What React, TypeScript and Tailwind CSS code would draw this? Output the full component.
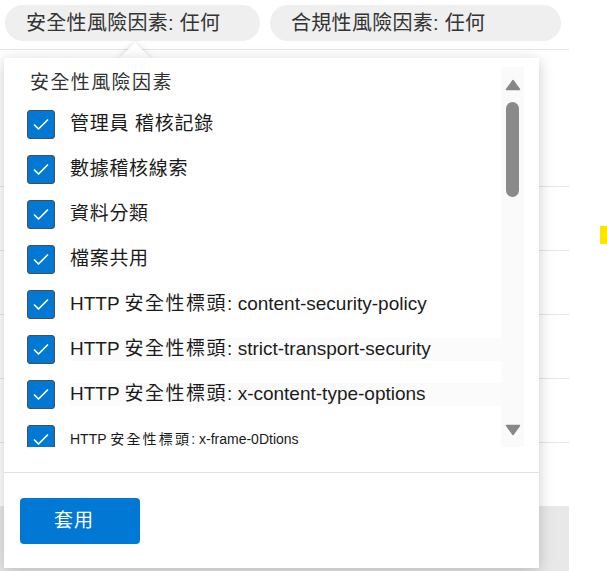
import React from "react";

const Check = () => (
  <div className="w-[28px] h-[29px] shrink-0 rounded-[3px] bg-[#0078d4] border border-[#4d4d4d] flex items-center justify-center">
    <svg width="26" height="27" viewBox="0 0 26 27">
      <path d="M6.5 14 L10.5 18 L19.5 9" fill="none" stroke="white" strokeWidth="1.7" strokeLinecap="round" strokeLinejoin="round" />
    </svg>
  </div>
);

const Row = ({ children, shade = false }: { children: React.ReactNode; shade?: boolean }) => (
  <div className="h-[45px] flex items-center">
    <Check />
    <div className={"ml-[15px] flex-1 h-[23px] flex items-center whitespace-nowrap text-[#1b1b1b] " + (shade ? "bg-[#fbfbfb]" : "")}>
      {children}
    </div>
  </div>
);

const HttpLabel = ({ rest }: { rest: string }) => (
  <span className="text-[19px]">
    HTTP <span className="tracking-[1.5px]">安全性標頭</span>: {rest}
  </span>
);

export default function App() {
  return (
    <div className="relative w-[607px] h-[571px] bg-white overflow-hidden font-['Liberation_Sans','Noto_Sans_CJK_TC',sans-serif]">
      {/* page behind */}
      <div className="w-[569px] flex flex-col">
        <div className="h-[50px] border-b border-[#e5e5e5] pt-[5px] pl-[5px] flex gap-[10px]">
          <div className="h-[36px] w-[255px] rounded-full bg-[#efefef] flex items-center pl-[21px] text-[20px] text-[#333] tracking-[0.3px]">
            安全性風險因素: 任何
          </div>
          <div className="h-[36px] w-[291px] rounded-full bg-[#efefef] flex items-center pl-[21px] text-[20px] text-[#333] tracking-[0.3px]">
            合規性風險因素: 任何
          </div>
        </div>
        <div className="h-[136px]" />
        <div className="h-[64px] border-t border-[#e6e6e6]" />
        <div className="h-[64px] border-t border-[#e6e6e6]" />
        <div className="h-[64px] border-t border-[#e6e6e6]" />
        <div className="h-[64px] border-t border-[#e6e6e6]" />
        <div className="h-[64px] border-t border-[#e6e6e6]" />
        <div className="h-[65px] bg-[#e8e8e8]" />
      </div>

      {/* yellow marker */}
      <div className="absolute left-[600px] top-[226px] w-[7px] h-[18px] bg-[#ffe500]" />

      {/* caret */}
      <div className="absolute left-[124px] top-[47px] w-[22px] h-[22px] rotate-45 bg-white shadow-[0_0_6px_rgba(0,0,0,0.15)]" />

      {/* popup */}
      <div className="absolute left-[4px] top-[58px] w-[535px] h-[510px] bg-white shadow-[0_3px_14px_rgba(0,0,0,0.2)] flex flex-col">
        <div className="pt-[9px] flex h-[389px]">
          <div className="flex-1 h-[380px] overflow-hidden pl-[23px]">
            <div className="pt-[5px] pl-[3px] leading-[22px] text-[19px] text-[#333] tracking-[1.4px]">安全性風險因素</div>
            <div className="mt-[8px] flex flex-col">
              <Row>
                <span className="text-[19px] tracking-[0.7px]">管理員 稽核記錄</span>
              </Row>
              <Row>
                <span className="text-[19px] tracking-[0.7px]">數據稽核線索</span>
              </Row>
              <Row>
                <span className="text-[19px] tracking-[0.7px]">資料分類</span>
              </Row>
              <Row>
                <span className="text-[19px] tracking-[0.7px]">檔案共用</span>
              </Row>
              <Row>
                <HttpLabel rest="content-security-policy" />
              </Row>
              <Row shade>
                <HttpLabel rest="strict-transport-security" />
              </Row>
              <Row shade>
                <HttpLabel rest="x-content-type-options" />
              </Row>
              <Row>
                <span className="text-[14px]">
                  HTTP <span className="tracking-[2.2px]">安全性標頭</span>: x-frame-0Dtions
                </span>
              </Row>
            </div>
          </div>
          <div className="w-[23px] h-[380px] bg-[#fafafa] mr-[15px] flex flex-col items-center">
            <svg width="16" height="12" viewBox="0 0 16 12" className="mt-[12px]">
              <path d="M8 1.5 L14.5 10.5 H1.5 Z" fill="#888" stroke="#888" strokeWidth="1.5" strokeLinejoin="round" />
            </svg>
            <div className="mt-[11px] w-[13px] h-[95px] rounded-full bg-[#8a8a8a]" />
            <div className="flex-1" />
            <svg width="16" height="12" viewBox="0 0 16 12" className="mb-[11px]">
              <path d="M1.5 1.5 H14.5 L8 10.5 Z" fill="#888" stroke="#888" strokeWidth="1.5" strokeLinejoin="round" />
            </svg>
          </div>
        </div>
        <div className="h-[25px]" />
        <div className="border-t border-[#e0e0e0] pt-[25px] pl-[16px]">
          <button className="h-[46px] w-[120px] rounded-[4px] bg-[#0078d4] text-white text-[19px] text-left pl-[34px] tracking-[1px]">
            套用
          </button>
        </div>
      </div>
    </div>
  );
}
